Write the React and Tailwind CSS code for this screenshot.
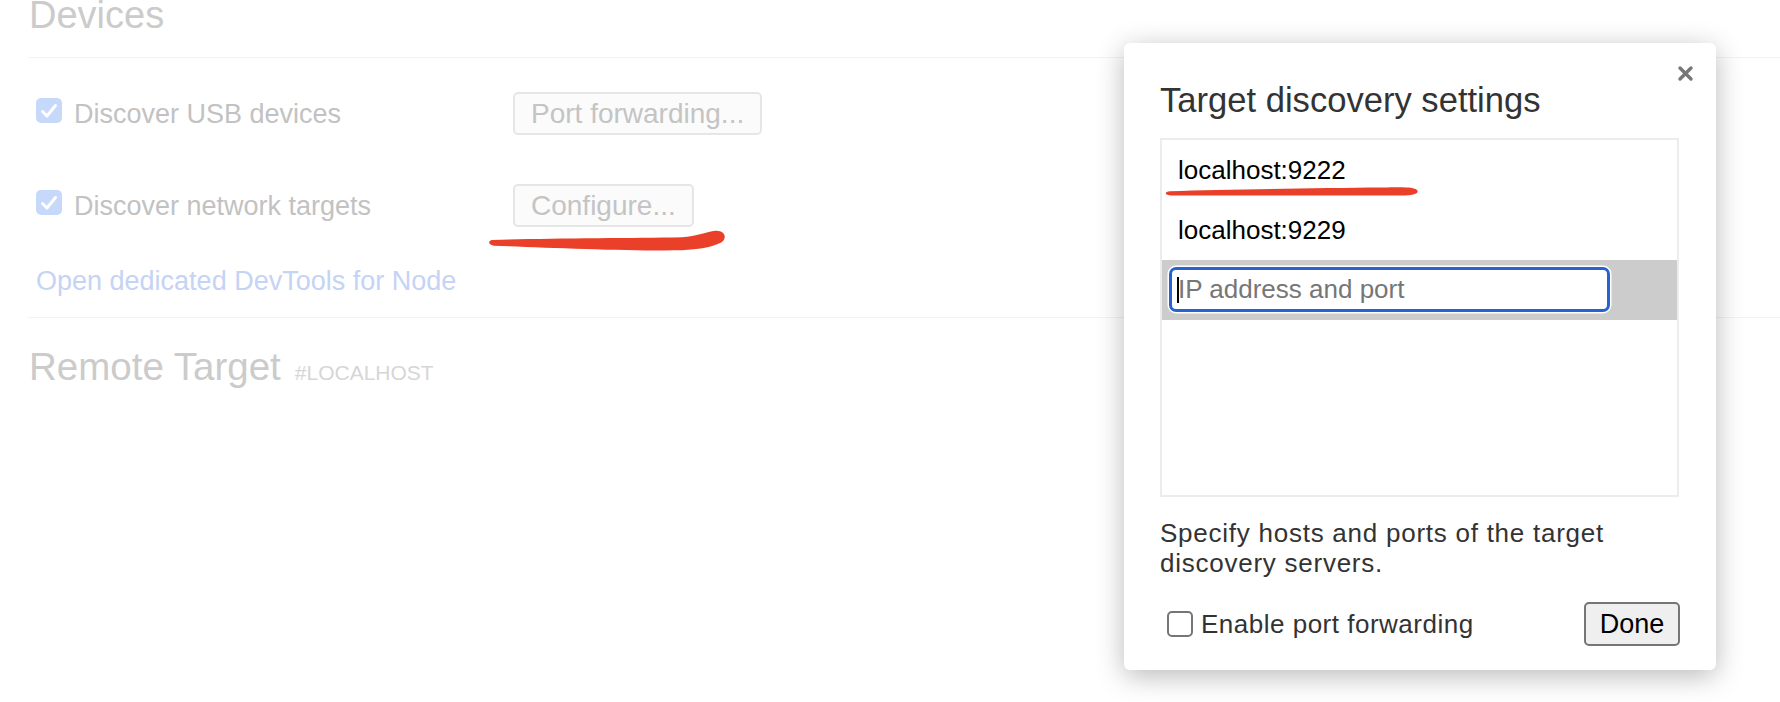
import React from 'react';

const sans = { fontFamily: '"Liberation Sans", Arial, sans-serif' };

function FadedCheck() {
  return (
    <div className="w-[26px] h-[25px] mb-[6px] rounded-[5px] bg-[#c7d9fb] flex items-center justify-center shrink-0">
      <svg width="18" height="16" viewBox="0 0 18 16" fill="none">
        <path d="M2.5 8.5 L7 13 L15.5 2.5" stroke="white" strokeWidth="3" strokeLinecap="round" strokeLinejoin="round" />
      </svg>
    </div>
  );
}

function FadedButton({ children }) {
  return (
    <button className="h-[43px] px-[16px] rounded-[5px] border-2 border-[#e6e6e6] bg-[#fbfbfb] text-[28px] leading-none text-[#c4c4c4]">
      {children}
    </button>
  );
}

function SettingRow({ label, action }) {
  return (
    <div className="flex items-center h-[43px]">
      <div className="w-[485px] flex items-center gap-[12px] pl-[8px]">
        <FadedCheck />
        <span className="text-[27px] leading-[30px] text-[#c2c2c2]">{label}</span>
      </div>
      <FadedButton>{action}</FadedButton>
    </div>
  );
}

function Scribble({ className, d }) {
  return (
    <svg className={className} viewBox="0 0 260 30" preserveAspectRatio="none">
      <path d={d} fill="#ea4029" />
    </svg>
  );
}

export default function App() {
  return (
    <div className="relative w-full h-[702px] bg-white overflow-hidden" style={sans}>
      {/* faded page behind the dialog */}
      <div className="pl-[28px]">
        <h1 className="text-[38px] leading-[38px] mt-[-4px] text-[#cbcbcb] pl-[1px]">Devices</h1>
        <div className="h-px bg-[#f3f3f3] mt-[23px]" />

        <div className="mt-[34px] flex flex-col gap-[49px]">
          <SettingRow label="Discover USB devices" action="Port forwarding..." />
          <SettingRow label="Discover network targets" action="Configure..." />
        </div>

        <div className="mt-[39px] pl-[8px] text-[27px] leading-[30px] text-[#c5d3f4]">
          Open dedicated DevTools for Node
        </div>
        <div className="h-px bg-[#f3f3f3] mt-[21px]" />

        <div className="mt-[30px] flex items-baseline gap-[14px] pl-[1px]">
          <span className="text-[38.5px] leading-[38px] text-[#cbcbcb]">Remote Target</span>
          <span className="text-[21px] text-[#d6d6d6]">#LOCALHOST</span>
        </div>
      </div>

      {/* red annotation under Configure... */}
      <Scribble
        className="absolute left-[488px] top-[227px] w-[246px] h-[28px]"
        d="M4 14 C60 12 150 12 205 11 C220 10 232 5 240 4 C250 3 254 12 246 17 C236 22 222 24 205 25 C150 26 60 22 6 20 C0 19 0 15 4 14 Z"
      />

      {/* dialog */}
      <div className="absolute left-[1124px] top-[43px] w-[592px] bg-white rounded-[6px] shadow-[0_6px_28px_rgba(0,0,0,0.28)] px-[36px] pt-[37px] pb-[24px]">
        <button className="absolute top-[21px] right-[22px] w-[18px] h-[18px] flex items-center justify-center">
          <svg width="17" height="17" viewBox="0 0 17 17">
            <path d="M3 3 L14 14 M14 3 L3 14" stroke="#777" strokeWidth="3.4" strokeLinecap="round" />
          </svg>
        </button>

        <h2 className="text-[34.6px] leading-[40px] text-[#333]">Target discovery settings</h2>

        <div className="mt-[18px] h-[359px] w-[519px] border-2 border-[#ececec]">
          <div className="h-[60px] flex items-center pl-[16px] text-[26px] text-black">localhost:9222</div>
          <div className="h-[60px] flex items-center pl-[16px] text-[26px] text-black">localhost:9229</div>
          <div className="h-[60px] bg-[#cccccc] pl-[7px] pt-[7px]">
            <div className="relative w-[441px] h-[45px] rounded-[7px] border-[3px] border-[#2862d2] bg-white shadow-[0_0_0_1.5px_white]">
              <input
                className="w-full h-full pl-[6px] text-[26px] text-black outline-none bg-transparent placeholder:text-[#767676]"
                style={sans}
                placeholder="IP address and port"
              />
              <span className="absolute left-[5px] top-[7px] w-[2px] h-[26px] bg-black" />
            </div>
          </div>
        </div>

        <p className="mt-[21px] text-[26px] leading-[30px] tracking-[0.75px] text-[#333]">
          Specify hosts and ports of the target discovery servers.
        </p>

        <div className="mt-[24px] h-[44px] flex items-center justify-between">
          <label className="flex items-center gap-[8px] pl-[7px]">
            <span className="w-[26px] h-[26px] rounded-[5px] border-2 border-[#767676] bg-white" />
            <span className="text-[26px] tracking-[0.5px] text-[#333]">Enable port forwarding</span>
          </label>
          <button className="w-[96px] h-[44px] rounded-[5px] border-2 border-[#767676] bg-[#efefef] text-[27px] leading-none text-black">
            Done
          </button>
        </div>
      </div>

      {/* red annotation under localhost:9222 */}
      <Scribble
        className="absolute left-[1164px] top-[184px] w-[258px] h-[18px]"
        d="M6 12 C60 9 150 7 220 6 C240 5 252 5 255 10 C258 16 250 19 240 19 C150 19 60 19 8 19 C0 19 0 13 6 12 Z"
      />
    </div>
  );
}
